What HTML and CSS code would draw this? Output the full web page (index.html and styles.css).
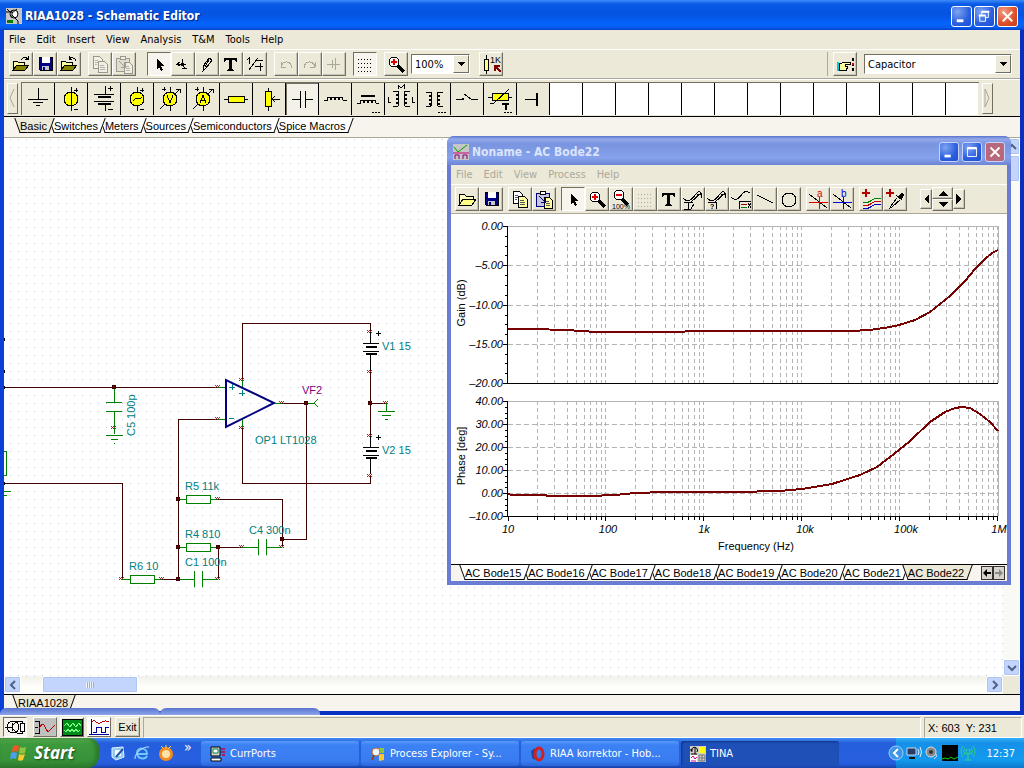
FILE: index.html
```html
<!DOCTYPE html>
<html lang="en">
<head>
  <meta charset="UTF-8">
  <meta name="viewport" content="width=device-width, initial-scale=1.0">
  <title>RIAA1028 - Schematic Editor</title>
  <link rel="stylesheet" href="styles.css">
</head>
<body>

  <!-- shared icons -->
  <svg class="sprite" aria-hidden="true">
    <symbol id="i-open" viewBox="0 0 24 24">
      <path d="M4 18V9h4l1 1h6v3" fill="#ffff9c" stroke="#000"/>
      <path d="M4 18l4-5h12l-4 5z" fill="#848400" stroke="#000"/>
      <path d="M12 8c2-3 5-3 7-1m0-3v3h-3" fill="none" stroke="#000"/>
    </symbol>
    <symbol id="i-close" viewBox="0 0 24 24">
      <path d="M4 18V9h4l1 1h6v3" fill="#ffff9c" stroke="#000"/>
      <path d="M4 18l4-5h12l-4 5z" fill="#848400" stroke="#000"/>
      <path d="M19 9c-1-4-5-4-7-2m0-3v3h3" fill="none" stroke="#000"/>
    </symbol>
    <symbol id="i-folder" viewBox="0 0 24 24">
      <path d="M4 18V7h5l2 2h7v3" fill="#ffffc0" stroke="#000"/>
      <path d="M4 18l4-6h13l-4 6z" fill="#ffff84" stroke="#000"/>
    </symbol>
    <symbol id="i-save" viewBox="0 0 24 24">
      <path d="M6 5h13v13H7l-1-1z" fill="#000084" stroke="#000"/>
      <path d="M9 5h8v6H9z" fill="#fff"/><path d="M9 14h7v4H9z" fill="#c6c6c6"/><path d="M10 15h2v3h-2z" fill="#000084"/>
    </symbol>
    <symbol id="i-copy" viewBox="0 0 24 24">
      <path class="page" d="M5 4h6l3 3v9H5z"/><path class="page note" d="M10 9h6l3 3v8h-9z"/>
      <path class="rule" d="M7 8h3M7 10h3M7 12h2M12 13h4M12 15h5M12 17h5"/>
    </symbol>
    <symbol id="i-paste" viewBox="0 0 24 24">
      <path class="page board" d="M4 6h13v13H4z"/><path class="page" d="M8 4h5v3H8z"/><path class="page note" d="M12 10h5l3 3v8h-8z"/>
      <path class="rule" d="M14 14h3M14 16h4M14 18h4"/><path class="into" d="M7 9l6 6m0-4v4H9"/>
    </symbol>
    <symbol id="i-cursor" viewBox="0 0 24 24"><path d="M10 7v10l2-2 2 4 2-1-2-4h3z" fill="#000"/></symbol>
    <symbol id="i-node" viewBox="0 0 24 24"><path d="M5 12h10M11 7v6l4 4M11 16h5M9 10l-3 2 3 2" fill="none" stroke="#000"/><path d="M10 11h3v3h-3z"/></symbol>
    <symbol id="i-pen" viewBox="0 0 24 24"><path d="M8 19l1-6 5-7 3 2-5 7zM9 13l3 2M14 8l-3 5" fill="none" stroke="#000"/></symbol>
    <symbol id="i-text" viewBox="0 0 24 24"><path d="M5 6h13v4h-1l-1-2h-3v9l2 1v1H8v-1l2-1V8H7l-1 2H5z" fill="#000"/></symbol>
    <symbol id="i-wire" viewBox="0 0 24 24"><path d="M4 8l2-2v6M6 18L15 6M12 8h8M12 14h8M17 11v8" fill="none" stroke="#000"/></symbol>
    <symbol id="i-undo" viewBox="0 0 24 24"><path d="M7 15v-5m0 5h5M7 15c2-7 10-7 11 1" fill="none" stroke="#aca899"/></symbol>
    <symbol id="i-redo" viewBox="0 0 24 24"><path d="M17 15v-5m0 5h-5M17 15c-2-7-10-7-11 1" fill="none" stroke="#aca899"/></symbol>
    <symbol id="i-cross" viewBox="0 0 24 24"><path d="M5 12h13M10 8v8M13 6v12" fill="none" stroke="#aca899"/></symbol>
    <symbol id="i-grid" viewBox="0 0 24 24">
      <path d="M5 7h15M5 11h15M5 15h15M5 19h15" fill="none" stroke="currentColor" stroke-dasharray="1 2"/>
    </symbol>
    <symbol id="i-zoom" viewBox="0 0 24 24">
      <path d="M14 14l6 6" stroke="#000" stroke-width="3"/><circle cx="10" cy="10" r="5" fill="#fff" stroke="#000"/>
      <path d="M7 10h6M10 7v6" stroke="#e00000" stroke-width="2"/>
    </symbol>
    <symbol id="i-min" viewBox="0 0 20 20"><path d="M5 13h7v3H5z" fill="#fff"/></symbol>
    <symbol id="i-max" viewBox="0 0 20 20"><path d="M5 5h10v10H5z" fill="none" stroke="#fff"/><path d="M5 5h10v2H5z" fill="#fff"/></symbol>
    <symbol id="i-restore" viewBox="0 0 20 20"><path d="M7 8V5h7v6h-3M5 9h6v6H5z" fill="none" stroke="#fff"/><path d="M4 8h7v2H4zM7 4h8v2H7z" fill="#fff"/></symbol>
    <symbol id="i-x" viewBox="0 0 20 20"><path d="M5 5l10 10M15 5L5 15" stroke="#fff" stroke-width="2"/></symbol>
    <symbol id="i-drop" viewBox="0 0 8 8"><path d="M0 2h8L4 6z" fill="#000"/></symbol>
    <symbol id="i-chev" viewBox="0 0 10 10"><path d="M3 1l4 4-4 4" fill="none" stroke="#4d6185" stroke-width="2"/></symbol>
    <symbol id="i-battery" viewBox="0 0 18 14"><path d="M1 1h16M1 9h16" stroke="#000"/><path d="M4 5h11M4 12h11" stroke="#000" stroke-width="2"/></symbol>
    <symbol id="i-tina" viewBox="0 0 16 16">
      <path d="M0 0h16v16H0z" fill="#d4d0c8"/><path d="M9 1h6v6H9z" fill="#ff0"/><path d="M2 6a3 3 0 1 1 5 0M0 4h3M5 1v7M1 8h6" fill="none" stroke="#000"/>
      <path d="M0 9h7v7H0z" fill="#fff"/><path d="M1 12l2-2 2 3 2-2M1 15h5" fill="none" stroke="#d08"/><path d="M9 9h6v6H9zM12 9v6M9 12h6" fill="none" stroke="#777"/>
    </symbol>
  </svg>

  <main class="window">
    <header class="titlebar">
      <svg class="app-icon" viewBox="0 0 16 16" aria-hidden="true">
        <path d="M0 0h16v16H0z" fill="#c6c6c6"/><circle cx="8" cy="6" r="4" fill="#fff" stroke="#000"/>
        <path d="M0 4h6M6 2v8M6 5l5-4M6 7l6 6v3M1 1l4 4" stroke="#000" fill="none"/><path d="M1 12h6v3H1z" fill="#008000"/>
      </svg>
      <h1>RIAA1028 - Schematic Editor</h1>
      <button class="cap" aria-label="Minimize"><svg><use href="#i-min"/></svg></button>
      <button class="cap" aria-label="Restore"><svg><use href="#i-restore"/></svg></button>
      <button class="cap close" aria-label="Close"><svg><use href="#i-x"/></svg></button>
    </header>

    <nav class="menu">
      <a href="#">File</a><a href="#">Edit</a><a href="#">Insert</a><a href="#">View</a><a href="#">Analysis</a><a href="#">T&amp;M</a><a href="#">Tools</a><a href="#">Help</a>
    </nav>

    <div class="toolbar">
      <div class="group">
        <button aria-label="Open"><svg><use href="#i-open"/></svg></button>
        <button aria-label="Save"><svg><use href="#i-save"/></svg></button>
        <button aria-label="Close file"><svg><use href="#i-close"/></svg></button>
      </div>
      <div class="group off">
        <button aria-label="Copy"><svg><use href="#i-copy"/></svg></button>
        <button aria-label="Paste"><svg><use href="#i-paste"/></svg></button>
      </div>
      <div class="group wide">
        <button class="down" aria-label="Select"><svg><use href="#i-cursor"/></svg></button>
        <button aria-label="Last component"><svg><use href="#i-node"/></svg></button>
        <button aria-label="Wire"><svg><use href="#i-pen"/></svg></button>
        <button aria-label="Text"><svg><use href="#i-text"/></svg></button>
        <button aria-label="Hide values"><svg><use href="#i-wire"/></svg></button>
      </div>
      <div class="group">
        <button aria-label="Undo"><svg><use href="#i-undo"/></svg></button>
        <button aria-label="Redo"><svg><use href="#i-redo"/></svg></button>
        <button aria-label="Mirror"><svg><use href="#i-cross"/></svg></button>
      </div>
      <div class="group"><button class="down" aria-label="Grid"><svg><use href="#i-grid"/></svg></button></div>
      <div class="group"><button aria-label="Zoom"><svg><use href="#i-zoom"/></svg></button></div>
      <div class="combo zoom">
        <select aria-label="Zoom level"><option>100%</option></select>
        <span class="drop"><svg><use href="#i-drop"/></svg></span>
      </div>
      <div class="group">
        <button aria-label="Component values"><svg viewBox="0 0 24 24">
          <path d="M7 3v19" stroke="#000"/><path d="M5 7h4v11H5z" fill="#ffff84" stroke="#000"/>
          <text x="11" y="11" font-size="9">1K</text><path d="M22 20l-6-6M16 19v-5h5" stroke="#840000" stroke-width="2" fill="none"/>
        </svg></button>
      </div>
      <div class="group last">
        <button aria-label="Find component"><svg viewBox="0 0 24 24">
          <path d="M4 10h2v9H4z" fill="#00c8e0"/><path d="M6 11h3l2-1h6v2h-5v2h2v2h-1v2H6z" fill="#ffff9c" stroke="#000"/>
          <path d="M20 6v14" stroke="#000" stroke-width="2" stroke-dasharray="3 2"/><path d="M19 11h2v2h-2z" fill="#e00000"/>
        </svg></button>
      </div>
      <div class="combo component">
        <select aria-label="Component"><option>Capacitor</option></select>
        <span class="drop"><svg><use href="#i-drop"/></svg></span>
      </div>
    </div>

    <div class="parts">
      <button class="nudge" aria-label="Previous parts"><svg viewBox="0 0 8 20"><path d="M6 1L2 10l4 9" fill="none" stroke="#aca899"/></svg></button>
      <div class="slots">
        <button aria-label="Ground"><svg viewBox="0 0 32 32"><path d="M16 5v11M6 16h20M11 19h10M14 22h4"/></svg></button>
        <button aria-label="Voltage source"><svg viewBox="0 0 32 32"><circle cx="16" cy="16" r="7"/><path d="M16 4v24M19 7h4M21 5v4M19 26h4"/></svg></button>
        <button aria-label="Battery"><svg viewBox="0 0 32 32"><path d="M17 3v8M17 22v6M6 11h20M6 18h20M20 5h5M22 3v5M20 26h5"/><path class="fat" d="M10 14h13M10 21h13"/></svg></button>
        <button aria-label="Voltage generator"><svg viewBox="0 0 32 32"><circle cx="16" cy="16" r="7"/><path d="M16 4v5M16 23v5M12 18c3-6 5 1 9-4M19 7h4M21 5v4M19 26h4"/></svg></button>
        <button aria-label="Controlled voltage source"><svg viewBox="0 0 32 32"><circle cx="16" cy="16" r="7"/><path d="M16 4v5M16 23v5M13 12l3 8 3-8M6 26l5-5M20 12l6-6M22 6h4v4M8 6h4M10 4v4"/></svg></button>
        <button aria-label="Controlled current source"><svg viewBox="0 0 32 32"><circle cx="16" cy="16" r="7"/><path d="M16 4v5M16 23v5M13 20l3-8 3 8M14 17h4M6 26l5-5M20 12l6-6M22 6h4v4M8 6h4M10 4v4"/></svg></button>
        <button aria-label="Resistor"><svg viewBox="0 0 32 32"><path class="yellow" d="M8 13h16v6H8z"/><path d="M4 16h4M24 16h4"/></svg></button>
        <button aria-label="Potentiometer"><svg viewBox="0 0 32 32"><path d="M15 5v23"/><path class="yellow" d="M12 8h6v15h-6z"/><path d="M19 16h8M22 13l-3 3 3 3"/></svg></button>
        <button class="down" aria-label="Capacitor"><svg viewBox="0 0 32 32"><path d="M6 16h8M19 16h8M14 8v17M19 8v17"/></svg></button>
        <button aria-label="Inductor"><svg viewBox="0 0 32 32"><path d="M5 17h3c0-4 4-4 4 0 0-4 4-4 4 0 0-4 4-4 4 0 0-4 4-4 4 0h4"/></svg></button>
        <button aria-label="Iron core inductor"><svg viewBox="0 0 32 32"><path d="M5 20h3c0-4 4-4 4 0 0-4 4-4 4 0 0-4 4-4 4 0 0-4 4-4 4 0h3M20 29h2M23 29h2M26 29h2"/><path class="fat" d="M9 13h14"/></svg></button>
        <button aria-label="Coupled inductors"><svg viewBox="0 0 32 32"><path d="M8 8h3c4 0 4 4 0 4 4 0 4 4 0 4 4 0 4 4 0 4 4 0 4 4-3 4M25 8h-3c-4 0-4 4 0 4-4 0-4 4 0 4-4 0-4 4 0 4-4 0-4 4 3 4M13 6V2l3 3 3-3v4M3 14v5h3M27 14v5h3"/></svg></button>
        <button aria-label="Transformer"><svg viewBox="0 0 32 32"><path d="M8 9h3c4 0 4 4 0 4 4 0 4 4 0 4 4 0 4 4 0 4 4 0 3 3-3 3M25 9h-3c-4 0-4 4 0 4-4 0-4 4 0 4-4 0-4 4 0 4-4 0-3 3 3 3M20 29h2M23 29h2M26 29h2"/></svg></button>
        <button aria-label="Switch"><svg viewBox="0 0 32 32"><path d="M5 16h6M13 11l7 5h7"/><circle cx="12" cy="16" r="1"/></svg></button>
        <button aria-label="Thermistor"><svg viewBox="0 0 32 32"><path class="yellow" d="M8 10h16v7H8z"/><path d="M4 14h4M24 14h4M6 21l4-1L25 6M20 29h2M23 29h2M26 29h2"/><path class="fat" d="M18 21h7M22 21v6"/></svg></button>
        <button aria-label="Jumper"><svg viewBox="0 0 32 32"><path d="M8 16h11"/><path class="fat" d="M20 10v13"/></svg></button>
        <span></span><span></span><span></span><span></span><span></span><span></span><span></span><span></span><span></span><span></span><span></span><span></span><span></span>
      </div>
      <button class="nudge" aria-label="Next parts"><svg viewBox="0 0 8 20"><path d="M2 1l4 9-4 9z" fill="none" stroke="#aca899"/></svg></button>
    </div>

    <div class="tabs upper">
      <button class="tab on">Basic</button><button class="tab">Switches</button><button class="tab">Meters</button><button class="tab">Sources</button><button class="tab">Semiconductors</button><button class="tab">Spice Macros</button>
    </div>

    <div class="workspace">
      <svg class="schematic" role="img" aria-label="RIAA1028 schematic">
        <defs>
          <pattern id="dots" width="8" height="8" patternUnits="userSpaceOnUse" x="6" y="1"><path d="M0 0h1v1H0z" fill="#c3cbdc"/></pattern>
          <path id="pin" d="M-2 -1h1v1h-1zM0 -1h1v1h-1zM2 -1h1v1h-1zM-1 0h1v1h-1zM1 0h1v1h-1zM-2 1h1v1h-1zM0 1h1v1h-1zM2 1h1v1h-1z"/>
        </defs>
        <rect width="100%" height="100%" fill="url(#dots)"/>
        <g transform="translate(-4 -138)">
          <g class="wire">
            <path d="M4 387H218M178 579V419H218M4 483H122V579M162 579H178M242 380V323H370V332M282 403H306V539H282M242 427V483H370V475M370 370V436M370 403H386M218 499H282V547M218 547H242M218 547V579"/>
          </g>
          <g class="part">
            <path d="M114 387V402M106 402H122M106 411H122M114 411V434M106 435H123M111 439H118M114 443H115"/>
            <path d="M4 451H6V475H4M4 491H11M4 495H7M178 499H186M186 495H210V503H186zM210 499H218M178 547H186M186 543H210V551H186zM210 547H218M122 579H130M130 575H154V583H130zM154 579H162M178 579H194M194 571V587M202 571V587M202 579H218M242 547H258M258 539V555M266 539V555M266 547H282"/>
            <path d="M218 387H226M218 419H226M242 380V388M242 419V427M275 403H282M306 403H314M318 399L314 403L318 407M386 403V411M378 411H395M382 415H391M385 419H388"/>
          </g>
          <path class="black" d="M370 332V344M370 354V370M370 436V448M370 458V474M376 333H381M378 331V336M376 437H381M378 435V440"/>
          <use href="#i-battery" x="362" y="342" width="18" height="14"/>
          <use href="#i-battery" x="362" y="446" width="18" height="14"/>
          <path class="opamp" d="M226 380V427L274 403z"/>
          <path class="sign" d="M229 387H235M232 384V390M239 393H245M242 390V396M229 418H234"/>
          <g class="pins">
            <use href="#pin" x="217" y="386"/><use href="#pin" x="217" y="418"/><use href="#pin" x="113" y="427"/><use href="#pin" x="241" y="379"/><use href="#pin" x="241" y="427"/><use href="#pin" x="281" y="402"/><use href="#pin" x="217" y="498"/><use href="#pin" x="161" y="578"/><use href="#pin" x="121" y="578"/><use href="#pin" x="217" y="578"/><use href="#pin" x="241" y="546"/><use href="#pin" x="281" y="546"/><use href="#pin" x="369" y="331"/><use href="#pin" x="369" y="371"/><use href="#pin" x="369" y="435"/><use href="#pin" x="369" y="475"/><use href="#pin" x="385" y="402"/>
          </g>
          <g class="joint">
            <circle cx="114" cy="387" r="2"/><circle cx="178" cy="499" r="2"/><circle cx="178" cy="547" r="2"/><circle cx="178" cy="579" r="2"/><circle cx="218" cy="547" r="2"/><circle cx="282" cy="539" r="2"/><circle cx="306" cy="403" r="2"/><circle cx="370" cy="403" r="2"/>
          </g>
          <path class="black" d="M4 338v3M4 370v3M4 386v3M4 482v3"/>
          <g class="label">
            <text x="185" y="490">R5 11k</text><text x="185" y="538">R4 810</text><text x="185" y="566">C1 100n</text><text x="129" y="570">R6 10</text><text x="249" y="534">C4 300n</text><text x="255" y="444">OP1 LT1028</text><text x="382" y="350">V1 15</text><text x="382" y="454">V2 15</text>
            <text transform="translate(135 436) rotate(-90)">C5 100p</text>
            <text class="probe" x="302" y="394">VF2</text>
          </g>
        </g>
      </svg>
      <div class="vscroll">
        <button class="arrow up" aria-label="Scroll up"><svg><use href="#i-chev"/></svg></button>
        <span class="thumb"></span>
        <button class="arrow dn" aria-label="Scroll down"><svg><use href="#i-chev"/></svg></button>
      </div>
    </div>
    <div class="hscroll">
      <button class="arrow lt" aria-label="Scroll left"><svg><use href="#i-chev"/></svg></button>
      <span class="thumb"></span>
      <button class="arrow" aria-label="Scroll right"><svg><use href="#i-chev"/></svg></button>
    </div>
    <div class="tabs sheet"><button class="tab on">RIAA1028</button></div>
    <div class="behind"><span></span><span></span></div>
  </main>

  <section class="window bode">
    <header class="titlebar">
      <svg class="app-icon" viewBox="0 0 16 16" aria-hidden="true">
        <path d="M0 0h16v16H0z" fill="#c6c6c6"/><path d="M1 3l4 5L14 1" fill="none" stroke="#00a000"/><path d="M0 9h16" stroke="#d00080"/><path d="M2 15v-4h4v4M10 15v-4h4v4" fill="none" stroke="#800080"/>
      </svg>
      <h2>Noname - AC Bode22</h2>
      <button class="cap" aria-label="Minimize"><svg><use href="#i-min"/></svg></button>
      <button class="cap" aria-label="Maximize"><svg><use href="#i-max"/></svg></button>
      <button class="cap close" aria-label="Close"><svg><use href="#i-x"/></svg></button>
    </header>
    <nav class="menu">
      <a href="#">File</a><a href="#">Edit</a><a href="#">View</a><a href="#">Process</a><a href="#">Help</a>
    </nav>
    <div class="toolbar">
      <div class="group">
        <button aria-label="Open"><svg><use href="#i-folder"/></svg></button>
        <button aria-label="Save"><svg><use href="#i-save"/></svg></button>
      </div>
      <div class="group">
        <button aria-label="Copy"><svg><use href="#i-copy"/></svg></button>
        <button aria-label="Paste"><svg><use href="#i-paste"/></svg></button>
      </div>
      <div class="group">
        <button class="down" aria-label="Select"><svg><use href="#i-cursor"/></svg></button>
        <button aria-label="Zoom in"><svg><use href="#i-zoom"/></svg></button>
        <button aria-label="Zoom all"><svg viewBox="0 0 24 24">
          <path d="M13 12l6 6" stroke="#000" stroke-width="3"/><circle cx="10" cy="8" r="5" fill="#fff" stroke="#000"/>
          <path d="M7 8h6" stroke="#e00000" stroke-width="2"/><text x="3" y="22" font-size="7">100%</text>
        </svg></button>
        <button class="faint" aria-label="Grid"><svg><use href="#i-grid"/></svg></button>
        <button aria-label="Text"><svg><use href="#i-text"/></svg></button>
        <button aria-label="Curve text"><svg viewBox="0 0 24 24">
          <path d="M2 11c5 5 8 3 13-4 2-3 4-3 6 0M20 6L9 16M16 7h4v4" fill="none" stroke="#000"/>
          <path d="M3 15h9M7 16v6M3 22h7l3-5" fill="none" stroke="#000"/>
        </svg></button>
        <button aria-label="Curve label"><svg viewBox="0 0 24 24">
          <path d="M2 11c5 5 8 3 13-4 2-3 4-3 6 0M20 6L9 16M16 7h4v4" fill="none" stroke="#000"/>
          <path d="M3 15h9l-1 7" fill="none" stroke="#000"/><text x="5" y="22" font-size="7" font-weight="bold">?</text>
        </svg></button>
        <button aria-label="Legend"><svg viewBox="0 0 24 24">
          <path d="M2 10c5 5 8 1 12-4 2-2 4-2 7 0M10 22v-8h12" fill="none" stroke="#000"/>
          <path d="M12 17h6" stroke="#a00000"/><path d="M12 20h6" stroke="#008000"/><path d="M19 16l3 5M22 16l-3 5" stroke="#000"/>
        </svg></button>
        <button aria-label="Line"><svg viewBox="0 0 24 24"><path d="M4 8l16 8" stroke="#000"/></svg></button>
        <button aria-label="Circle"><svg viewBox="0 0 24 24"><circle cx="12" cy="13" r="7" fill="none" stroke="#000"/></svg></button>
      </div>
      <div class="group">
        <button aria-label="Cursor a"><svg viewBox="0 0 24 24"><path d="M3 7l18 14" stroke="#000"/><path d="M3 15h19M13 10v12" stroke="#e00000"/><text x="11" y="10" font-size="10" fill="#e00000">a</text></svg></button>
        <button aria-label="Cursor b"><svg viewBox="0 0 24 24"><path d="M3 7l18 14" stroke="#000"/><path d="M3 15h19M13 10v12" stroke="#0000e0"/><text x="11" y="10" font-size="10" fill="#0000e0">b</text></svg></button>
      </div>
      <div class="group">
        <button aria-label="Add curves"><svg viewBox="0 0 24 24">
          <path d="M3 6h8M7 2v8" stroke="#b00000" stroke-width="2"/>
          <g fill="none"><path d="M4 15c7 4 9-7 18-3" stroke="#008000"/><path d="M4 18c7 4 9-7 18-3" stroke="#c00000"/><path d="M4 21c7 4 9-7 18-3" stroke="#0000c0"/></g>
        </svg></button>
        <button aria-label="Pick curve"><svg viewBox="0 0 24 24">
          <path d="M3 6h8M7 2v8" stroke="#b00000" stroke-width="2"/><path d="M16 9l3-3 2 2-3 4z" fill="#000" stroke="#000"/>
          <path d="M13 8l6 5M14 11l-6 8-1 2 2-1 8-7" fill="none" stroke="#000"/>
        </svg></button>
      </div>
      <div class="spin">
        <button aria-label="Left"><svg viewBox="0 0 10 10"><path d="M8 0v10L3 5z"/></svg></button>
        <div>
          <button aria-label="Up"><svg viewBox="0 0 10 6"><path d="M0 6h10L5 1z"/></svg></button>
          <button aria-label="Down"><svg viewBox="0 0 10 6"><path d="M0 0h10L5 5z"/></svg></button>
        </div>
        <button aria-label="Right"><svg viewBox="0 0 10 10"><path d="M2 0v10l5-5z"/></svg></button>
      </div>
    </div>

    <svg class="chart" role="img" aria-label="Gain and phase against frequency">
      <defs>
        <!-- one decade: 2..9 and the next power of ten -->
        <pattern id="decade" x="508" y="226" width="98" height="7" patternUnits="userSpaceOnUse">
          <path d="M29 0h1v4h-1zM46 0h1v4h-1zM59 0h1v4h-1zM68 0h1v4h-1zM76 0h1v4h-1zM82 0h1v4h-1zM88 0h1v4h-1zM93 0h1v4h-1zM97 0h1v4h-1z" fill="#b4b4b4"/>
        </pattern>
        <pattern id="xticks" x="508" y="516" width="98" height="8" patternUnits="userSpaceOnUse">
          <path d="M29 0h1v4h-1zM46 0h1v4h-1zM59 0h1v4h-1zM68 0h1v4h-1zM76 0h1v4h-1zM82 0h1v4h-1zM88 0h1v4h-1zM93 0h1v4h-1zM97 0h1v5h-1z"/>
        </pattern>
      </defs>
      <g transform="translate(-451 -214)">
        <rect x="508" y="226" width="490" height="157" fill="url(#decade)"/>
        <rect x="508" y="401" width="490" height="115" fill="url(#decade)"/>
        <rect x="508" y="516" width="490" height="6" fill="url(#xticks)"/>
        <path class="rules" d="M508 265H998M508 305H998M508 344H998M508 424H998M508 447H998M508 470H998M508 493H998"/>
        <path class="frame" d="M508 226H998V383M508 401H998V516"/>
        <path class="axis" d="M507 226V383H998M507 401V516H998M503 226h4M503 265h4M503 305h4M503 344h4M503 383h4M503 401h4M503 424h4M503 447h4M503 470h4M503 493h4M503 516h4M508 516v5"/>
        <path class="axis" d="M505 236h2M505 246h2M505 255h2M505 275h2M505 285h2M505 295h2M505 315h2M505 324h2M505 334h2M505 354h2M505 363h2M505 373h2M505 407h2M505 413h2M505 418h2M505 430h2M505 436h2M505 441h2M505 453h2M505 459h2M505 464h2M505 476h2M505 482h2M505 487h2M505 499h2M505 505h2M505 510h2"/>
        <path class="curve" d="M508 329L531 329L567 330L596 332L684 332L686 331L850 331L870 330L890 327L899 325L915 320L930 312L940 304L950 296L965 281L975 269L985 259L992 253L998 250"/>
        <path class="curve" d="M508 494L512 495L546 495L547 496L590 496L615 495L635 493L665 492L735 492L780 491L802 489L832 484L860 475L877 467L890 457L899 450L910 441L930 422L945 412L955 408L962 407L970 408L980 414L990 422L998 431"/>
        <g class="num end">
          <text x="503" y="230">0.00</text><text x="503" y="269">–5.00</text><text x="503" y="309">–10.00</text><text x="503" y="348">–15.00</text><text x="503" y="387">–20.00</text>
          <text x="503" y="405">40.00</text><text x="503" y="428">30.00</text><text x="503" y="451">20.00</text><text x="503" y="474">10.00</text><text x="503" y="497">0.00</text><text x="503" y="520">–10.00</text>
        </g>
        <g class="num mid">
          <text x="508" y="533">10</text><text x="608" y="533">100</text><text x="704" y="533">1k</text><text x="805" y="533">10k</text><text x="906" y="533">100k</text><text x="999" y="533">1M</text>
        </g>
        <g class="caption">
          <text x="756" y="550">Frequency (Hz)</text>
          <text transform="translate(465 303) rotate(-90)">Gain (dB)</text>
          <text transform="translate(465 456) rotate(-90)">Phase [deg]</text>
        </g>
      </g>
    </svg>

    <div class="tabs">
      <button class="tab">AC Bode15</button><button class="tab">AC Bode16</button><button class="tab">AC Bode17</button><button class="tab">AC Bode18</button><button class="tab">AC Bode19</button><button class="tab">AC Bode20</button><button class="tab">AC Bode21</button><button class="tab on">AC Bode22</button>
      <div class="flip">
        <button aria-label="Tabs left"><svg viewBox="0 0 10 10"><path d="M5 1v3h4v2H5v3L1 5z"/></svg></button>
        <button aria-label="Tabs right" disabled><svg viewBox="0 0 10 10"><path d="M5 1v3H1v2h4v3l4-4z"/></svg></button>
      </div>
    </div>
  </section>

  <div class="instruments">
    <button class="down" aria-label="Schematic editor"><svg viewBox="0 0 22 18"><circle cx="9" cy="9" r="6" fill="none" stroke="#000"/><path d="M1 9h7M8 5v8M8 8l4-4M8 10l5 5M12 3h6v12h-5" fill="none" stroke="#000"/><path d="M16 5h4v8h-4z" fill="#fff" stroke="#000"/></svg></button>
    <button class="grey" aria-label="Signal analyzer"><svg viewBox="0 0 22 18"><path d="M1 3h4v12H1M1 9h3" fill="none" stroke="#000"/><path d="M5 11c4-8 5-5 7 0s4 1 9-4" fill="none" stroke="#c00000"/></svg></button>
    <button class="green" aria-label="Oscilloscope"><svg viewBox="0 0 22 18"><path d="M1 1h20v16H1z" fill="#008a1c" stroke="#000"/><path d="M3 8l3-3 3 4 3-4 3 4 3-4 2 3M3 12l2 2 2-3 2 3 2-3 2 3 2-3 2 3 2-2" fill="none" stroke="#7f7"/></svg></button>
    <button aria-label="Logic analyzer"><svg viewBox="0 0 22 18"><path d="M0 0h22v18H0z" fill="#fff"/><path d="M3 1v16M1 16h20M5 14h3v-5h5v5h4v-5h4" fill="none" stroke="#0000a0"/><path d="M3 5c4-6 5 2 9 0s5-3 9-1" fill="none" stroke="#c00000"/></svg></button>
    <button class="exit">Exit</button>
    <div class="pane"></div>
    <div class="pane coords">X: 603&nbsp; Y: 231</div>
  </div>

  <footer class="taskbar">
    <button class="start">
      <svg viewBox="0 0 18 17" aria-hidden="true"><path d="M3 2c2-1 4-1 6 0L8 8C6 7 4 7 2 8z" fill="#f0562a"/><path d="M10 3c2 1 4 1 6 0l-1 6c-2 1-4 1-6 0z" fill="#8cc63f"/><path d="M1 9c2-1 4-1 6 0l-1 6c-2-1-4-1-6 0z" fill="#4aa0f0"/><path d="M9 10c2 1 4 1 6 0l-2 6c-2 1-4 1-5 0z" fill="#fbc82e"/></svg>
      Start
    </button>
    <div class="quick">
      <a href="#" aria-label="Show desktop"><svg viewBox="0 0 16 16"><path d="M2 3l11-1 1 10-8 3-4-3z" fill="#8ccaf5" stroke="#e8f4ff"/><path d="M5 5h6v6H5z" fill="#fff"/><path d="M6 12l7-8" stroke="#2554a8" stroke-width="2"/></svg></a>
      <a href="#" aria-label="Internet Explorer"><svg viewBox="0 0 16 16"><path d="M13 11c-2 4-10 3-10-3s10-6 10 1H4" fill="none" stroke="#6ec8fa" stroke-width="2"/><path d="M1 14C0 9 9 1 15 2" fill="none" stroke="#bfe6ff"/></svg></a>
      <a href="#" aria-label="Media"><svg viewBox="0 0 16 16"><circle cx="8" cy="9" r="7" fill="#f58a1f"/><circle cx="8" cy="9" r="4" fill="#ffe2a8"/><path d="M3 1l3 3M13 1l-3 3M8 0v4" stroke="#ffd24a"/></svg></a>
      <span class="more">»</span>
    </div>
    <div class="tasks">
      <button><svg viewBox="0 0 16 16"><path d="M1 1h9v9H1z" fill="#d4d0c8" stroke="#000"/><path d="M3 3h5v4H3z" fill="#fff" stroke="#084"/><path d="M1 12h10v3H1z" fill="#fff" stroke="#000"/><path d="M11 3h4M11 6h4M12 9h3" stroke="#a0206a" stroke-width="2"/></svg>CurrPorts</button>
      <button><svg viewBox="0 0 16 16"><path d="M8 2h6v5H9z" fill="#8cc63f"/><path d="M9 8h5v6l-5 1z" fill="#fbc82e"/><circle cx="6" cy="6" r="4" fill="#eaf6ff" stroke="#b96a3a"/><path d="M4 9l-2 5" stroke="#8a4a20" stroke-width="2"/></svg>Process Explorer - Sy...</button>
      <button><svg viewBox="0 0 16 16"><path d="M1 5l4-3v12l-3-2z" fill="#234a9a"/><ellipse cx="9" cy="8" rx="4" ry="6" fill="none" stroke="#d02020" stroke-width="3"/></svg>RIAA korrektor - Hob...</button>
      <button class="on"><svg><use href="#i-tina"/></svg>TINA</button>
    </div>
    <div class="tray">
      <button class="expand" aria-label="Show hidden icons"><svg viewBox="0 0 16 16"><circle cx="8" cy="8" r="7" fill="#3b95e8" stroke="#9fd0ff"/><path d="M10 4L6 8l4 4" fill="none" stroke="#fff" stroke-width="2"/></svg></button>
      <svg viewBox="0 0 16 16"><path d="M1 3h9v7H1z" fill="#2a3a66" stroke="#cdd6e8"/><path d="M3 13h6" stroke="#111" stroke-width="2"/><path d="M12 4q2 3 0 6M14 2q3 5 0 10" fill="none" stroke="#dfefff"/></svg>
      <svg viewBox="0 0 16 16"><circle cx="7" cy="7" r="5" fill="#888" stroke="#ddd"/><circle cx="7" cy="7" r="2" fill="#333"/><path d="M12 9q2 3-2 5" fill="none" stroke="#cfe3ff"/></svg>
      <svg viewBox="0 0 16 16"><path d="M0 0h16v16H0z"/><path d="M0 14l3-1 3 1 3-2 3 2 4-2" fill="none" stroke="#0d0"/></svg>
      <svg viewBox="0 0 16 16"><path d="M8 15V7M5 3q-3 3 0 7M11 3q3 3 0 7M3 1q-4 5 0 11M13 1q4 5 0 11M5 15h6M6 5h4v4H6z" fill="none" stroke="#2fd08a"/></svg>
      <time>12:37</time>
    </div>
  </footer>

</body>
</html>
```
FILE: styles.css
```css
* {
  box-sizing: border-box;
}

body {
  margin: 0;
  height: 100vh;
  display: flex;
  flex-direction: column;
  overflow: hidden;
  position: relative;
  background: #ece9d8;
  font-family: "DejaVu Sans Condensed", "Noto Sans", sans-serif;
  font-size: 11px;
  color: #000;
}

button,
select {
  font: inherit;
  color: inherit;
  margin: 0;
  padding: 0;
  border: 0;
  background: none;
}

a {
  color: inherit;
  text-decoration: none;
}

svg {
  display: block;
}

svg text {
  font-family: "Liberation Sans", sans-serif;
}

.sprite {
  position: absolute;
  width: 0;
  height: 0;
}

/* windows */
.window {
  flex: 1;
  min-height: 0;
  display: flex;
  flex-direction: column;
  position: relative;
  border: 4px solid #0a3fd8;
  border-top: 0;
  border-right-color: #0a2fc0;
  border-bottom-color: #0831c0;
  background: #ece9d8;
}

.titlebar {
  display: flex;
  align-items: center;
  gap: 2px;
  height: 30px;
  flex: none;
  margin: 0 -4px;
  padding: 2px 6px 0 6px;
  background: linear-gradient(#3c8cf8, #0a5ae8 4px, #0552e0 14px, #0564fc 24px, #0458ea 28px, #0340c0);
}

.titlebar h1,
.titlebar h2 {
  flex: 1;
  margin: 0 0 0 1px;
  font: bold 12px "DejaVu Sans Condensed", "Noto Sans", sans-serif;
  color: #fff;
  text-shadow: 1px 1px 1px #0a1f80;
}

.app-icon {
  width: 16px;
  height: 16px;
}

.cap {
  width: 21px;
  height: 21px;
  border: 1px solid #fff;
  border-radius: 3px;
  background: radial-gradient(circle at 30% 25%, #7fa4f0, #2a5ee0 60%, #1c4fd0);
}

.cap svg {
  width: 19px;
  height: 19px;
}

.cap.close {
  background: radial-gradient(circle at 30% 25%, #f0a088, #dd4f28 60%, #c83c18);
}

.menu {
  display: flex;
  gap: 11px;
  height: 19px;
  flex: none;
  align-items: center;
  padding: 0 5px;
}

/* toolbars */
.toolbar {
  display: flex;
  align-items: center;
  height: 30px;
  flex: none;
  padding: 0 8px 0 5px;
  border-top: 1px solid #fff;
  border-bottom: 1px solid #aca899;
  gap: 7px;
}

.group {
  display: flex;
}

.group.wide {
  margin-left: 4px;
}

.group.last {
  margin-left: auto;
  padding-left: 5px;
  border-left: 1px solid #aca899;
}

.toolbar button,
.instruments button {
  width: 24px;
  height: 24px;
  border: 1px solid;
  border-color: #fff #716f64 #716f64 #fff;
  box-shadow: inset -1px -1px #c8c4b4;
}

.toolbar button.down,
.instruments button.down {
  border-color: #716f64 #fff #fff #716f64;
  background: #f6f4ec;
  box-shadow: none;
}

.toolbar .group svg {
  width: 24px;
  height: 24px;
  margin: -1px;
}

.toolbar svg,
.slots svg,
.instruments svg {
  shape-rendering: crispEdges;
}

.page {
  fill: #fff;
  stroke: #000;
}

.page.note {
  fill: #ffffa0;
}

.page.board {
  fill: #c6c6e0;
  stroke: #000084;
}

.rule {
  stroke: #555;
}

.into {
  fill: none;
  stroke: #000084;
}

.off svg {
  filter: grayscale(1) opacity(0.35);
}

.faint {
  color: #aca899;
}

.combo {
  display: flex;
  height: 20px;
  border: 1px solid;
  border-color: #716f64 #fff #fff #716f64;
  background: #fff;
  position: relative;
}

.combo select {
  appearance: none;
  flex: 1;
  padding: 0 3px;
  outline: 0;
}

.drop {
  position: absolute;
  top: 0;
  right: 0;
  bottom: 0;
  width: 16px;
  display: grid;
  place-items: center;
  background: #ece9d8;
  border: 1px solid;
  border-color: #fff #716f64 #716f64 #fff;
  pointer-events: none;
}

.drop svg {
  width: 8px;
  height: 8px;
}

.zoom {
  width: 59px;
  margin: 0 2px 0 -4px;
}

.component {
  width: 148px;
}

.parts {
  display: flex;
  align-items: center;
  gap: 3px;
  height: 38px;
  flex: none;
  padding-left: 3px;
  border-top: 1px solid #fff;
  border-bottom: 1px solid #000;
}

.nudge {
  width: 11px;
  height: 31px;
  border: 1px solid;
  border-color: #fff #716f64 #716f64 #fff;
}

.nudge svg {
  width: 8px;
  height: 20px;
}

.slots {
  display: flex;
  height: 33px;
  border-top: 1px solid #716f64;
  border-left: 1px solid #716f64;
}

.slots > * {
  width: 33px;
  border-right: 1px solid #000;
}

.slots > span {
  background: #fff;
}

.slots > :last-child {
  border-color: #ece9d8;
}

.slots .down {
  box-shadow: inset 1px 1px #716f64;
  background: #f3f1e8;
}

.slots svg {
  width: 32px;
  height: 32px;
  fill: none;
  stroke: #000;
}

.slots circle,
.slots .yellow {
  fill: #ff0;
}

.slots .fat {
  stroke-width: 2;
}

/* sheet tabs */
.tabs {
  display: flex;
  height: 17px;
  flex: none;
  padding-left: 10px;
  border-top: 1px solid #000;
  background: #f6f4ec;
}

.tabs.upper {
  height: 21px;
  padding: 1px 0 4px 12px;
  border-top: 0;
  border-bottom: 1px solid #aca899;
}

.tab {
  position: relative;
  padding: 0 4px;
  margin-right: -1px;
  font: 11px/14px "Liberation Sans", sans-serif;
  height: 15px;
  white-space: nowrap;
}

.tab::before,
.tab::after {
  content: "";
  position: absolute;
  z-index: -1;
  top: 0;
  bottom: 0;
  background: #fff;
  border-bottom: 1px solid #000;
}

.tab::before {
  left: 1px;
  right: 50%;
  border-left: 1px solid #000;
  transform: skewX(20deg);
}

.tab::after {
  left: 40%;
  right: -1px;
  border-right: 1px solid #000;
  transform: skewX(-20deg);
}

.tab:nth-child(1) { z-index: 8; }
.tab:nth-child(2) { z-index: 7; }
.tab:nth-child(3) { z-index: 6; }
.tab:nth-child(4) { z-index: 5; }
.tab:nth-child(5) { z-index: 4; }
.tab:nth-child(6) { z-index: 3; }
.tab:nth-child(7) { z-index: 2; }

.tab.on {
  z-index: 9;
}

.tab.on::before,
.tab.on::after {
  background: #ece9d8;
}

/* drawing area */
.workspace {
  flex: 1;
  min-height: 0;
  display: flex;
  background: #fff;
}

.schematic {
  flex: 1;
  min-width: 0;
  height: 100%;
  fill: none;
  shape-rendering: crispEdges;
}

.wire {
  stroke: #400000;
}

.part {
  stroke: #008000;
}

.black {
  stroke: #000;
}

.opamp {
  stroke: #000080;
  stroke-width: 2;
  shape-rendering: auto;
}

.sign {
  stroke: #008080;
}

.pins {
  fill: #b02020;
}

.joint {
  fill: #600000;
  stroke: #400000;
}

.label {
  fill: #008080;
  font-size: 11px;
}

.label .probe {
  fill: #800080;
}

.vscroll {
  width: 17px;
  display: flex;
  flex-direction: column;
  background: #fafaf5;
}

.hscroll {
  display: flex;
  height: 18px;
  flex: none;
  padding-right: 17px;
  background: linear-gradient(90deg, transparent calc(100% - 17px), #ece9d8 0), linear-gradient(#f2f1ea, #fefefb 60%);
}

.arrow,
.thumb {
  background: #c4d5fc;
  border: 1px solid #fff;
  border-radius: 2px;
  box-shadow: inset 0 0 0 1px #b0c4f4;
}

.arrow {
  width: 17px;
  height: 17px;
  display: grid;
  place-items: center;
}

.arrow svg {
  width: 10px;
  height: 10px;
}

.up svg {
  transform: rotate(-90deg);
}

.dn svg {
  transform: rotate(90deg);
}

.lt svg {
  transform: rotate(180deg);
}

.vscroll .thumb {
  height: 27px;
}

.vscroll .dn {
  margin-top: auto;
}

.hscroll .thumb {
  width: 96px;
  height: 17px;
  margin: 0 auto 0 21px;
  background: repeating-linear-gradient(90deg, #eef4fe 0 1px, #8cb0f8 1px 2px) center / 8px 6px no-repeat, #c4d5fc;
}

/* title bars of windows further down the stack */
.behind {
  position: absolute;
  left: -4px;
  bottom: -4px;
  display: flex;
  z-index: 10;
}

.behind span {
  width: 160px;
  height: 7px;
  border-radius: 6px 6px 0 0;
  background: linear-gradient(#5a74cc, #8ba4ea);
}

/* bode plot */
.bode {
  position: absolute;
  left: 447px;
  top: 136px;
  width: 564px;
  border-color: #6a7cd4;
  border-radius: 7px 7px 0 0;
  z-index: 20;
}

.bode .titlebar {
  height: 29px;
  gap: 3px;
  border-radius: 7px 7px 0 0;
  background: linear-gradient(#5a72cc, #93a9ea 3px, #7a94e0 8px, #86a2ec 22px, #6c84d4);
}

.bode h2 {
  color: #dbe4fa;
  text-shadow: none;
  margin-left: 0;
}

.bode .cap {
  width: 20px;
  height: 20px;
  border-color: #c8d4f8;
}

.bode .cap svg {
  width: 18px;
  height: 18px;
}

.bode .cap.close {
  background: #b8687c;
}

.bode .menu {
  color: #aca899;
}

.bode .toolbar {
  padding-left: 4px;
  gap: 5px;
}

.spin {
  display: flex;
  align-items: center;
  margin-left: 8px;
}

.toolbar .spin button {
  width: 12px;
  height: 20px;
  display: grid;
  place-items: center;
}

.toolbar .spin div button {
  width: 21px;
  height: 12px;
}

.spin svg {
  width: 10px;
  height: 10px;
}

.spin div svg {
  height: 6px;
}

.chart {
  width: 100%;
  height: 350px;
  background: #fff;
  shape-rendering: crispEdges;
}

.rules {
  stroke: #b4b4b4;
  stroke-dasharray: 5 3;
}

.frame {
  fill: none;
  stroke: #b4b4b4;
}

.axis {
  fill: none;
  stroke: #000;
}

.curve {
  fill: none;
  stroke: #780000;
  stroke-width: 2;
}

.num {
  font-size: 11px;
  font-style: italic;
}

.end {
  text-anchor: end;
}

.mid,
.caption {
  text-anchor: middle;
}

.caption {
  font-size: 11px;
}

.flip {
  display: flex;
  margin: 1px 2px 0 auto;
}

.flip button {
  width: 12px;
  height: 14px;
  border: 1px solid #333;
  background: #d8d4cc;
}

.flip svg {
  width: 10px;
  height: 10px;
}

.flip button:disabled {
  fill: #888;
}

/* instrument strip */
.instruments {
  display: flex;
  align-items: center;
  gap: 3px;
  height: 23px;
  flex: none;
  padding: 0 2px 0 3px;
  border-top: 1px solid #fff;
}

.instruments button {
  height: 20px;
}

.instruments button svg {
  width: 22px;
  height: 18px;
}

.instruments .grey {
  margin-left: 3px;
  background: #c0c0c0;
}

.instruments .exit {
  width: 25px;
  margin-left: 1px;
  font: 11px "Liberation Sans", sans-serif;
}

.pane {
  flex: 1;
  height: 21px;
  border: 1px solid;
  border-color: #aca899 #fff #fff #aca899;
}

.coords {
  flex: none;
  width: 98px;
  padding-left: 3px;
  font: 11px/20px "Liberation Sans", sans-serif;
}

/* taskbar */
.taskbar {
  display: flex;
  height: 30px;
  flex: none;
  color: #fff;
  background: linear-gradient(#3f8cf3, #245edb 5px, #2860e0 20px, #245cdc 26px, #1941a5);
}

.start {
  display: flex;
  align-items: center;
  gap: 6px;
  width: 99px;
  padding: 0 0 2px 10px;
  border-radius: 0 10px 12px 0;
  font: italic bold 17px "Noto Sans", sans-serif;
  color: #fff;
  text-shadow: 1px 1px 2px #1c4a1c;
  background: linear-gradient(#5eac56, #3c9a3c 6px, #389238 22px, #2c7a2c);
  box-shadow: inset -3px 0 4px #2a742a;
}

.start svg {
  width: 18px;
  height: 17px;
}

.quick {
  display: flex;
  align-items: center;
  gap: 8px;
  width: 102px;
  padding-left: 11px;
}

.quick svg,
.tasks svg,
.tray svg {
  width: 16px;
  height: 16px;
}

.more {
  margin: -12px 0 0 2px;
  font-size: 14px;
}

.tasks {
  display: flex;
  flex: 1;
  min-width: 0;
  gap: 2px;
  padding: 3px 0 2px;
}

.tasks button {
  display: flex;
  align-items: center;
  gap: 4px;
  flex: 0 1 158px;
  min-width: 0;
  padding: 0 9px;
  border-radius: 3px;
  white-space: nowrap;
  background: linear-gradient(#5a9afa, #3c81f3 4px, #3a7cf0 20px, #2a66d8);
}

.tasks .on {
  background: #1e50b8;
  box-shadow: inset 1px 1px 2px #123480;
}

.tray {
  display: flex;
  align-items: center;
  gap: 2px;
  width: 128px;
  padding-right: 9px;
  background: linear-gradient(#35b0f8, #1590e8 5px, #129aee 22px, #0f78cc);
}

.expand {
  margin-left: -8px;
}

.tray time {
  margin-left: auto;
}
```
